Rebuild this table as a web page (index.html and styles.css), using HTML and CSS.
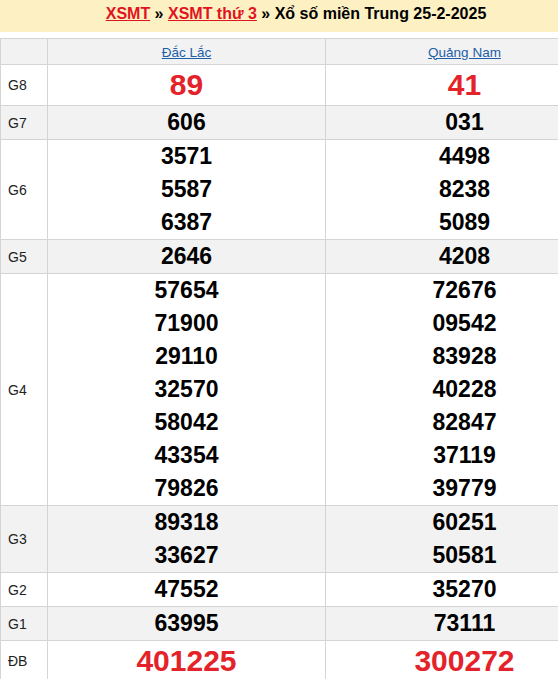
FILE: index.html
```html
<!DOCTYPE html>
<html lang="vi">
<head>
<meta charset="utf-8">
<link rel="stylesheet" href="styles.css">
</head>
<body>
<div class="title">
  <a href="#" class="red">XSMT</a> » <a href="#" class="red">XSMT thứ 3</a> » Xổ số miền Trung 25-2-2025
</div>
<table class="kq">
  <tr class="head alt">
    <td class="lbl"></td>
    <td><a href="#" class="prov">Đắc Lắc</a></td>
    <td><a href="#" class="prov">Quảng Nam</a></td>
  </tr>
  <tr class="big">
    <td class="lbl">G8</td>
    <td><div class="red-num">89</div></td>
    <td><div class="red-num">41</div></td>
  </tr>
  <tr class="alt">
    <td class="lbl">G7</td>
    <td><div class="n">606</div></td>
    <td><div class="n">031</div></td>
  </tr>
  <tr>
    <td class="lbl">G6</td>
    <td><div class="n">3571</div><div class="n">5587</div><div class="n">6387</div></td>
    <td><div class="n">4498</div><div class="n">8238</div><div class="n">5089</div></td>
  </tr>
  <tr class="alt">
    <td class="lbl">G5</td>
    <td><div class="n">2646</div></td>
    <td><div class="n">4208</div></td>
  </tr>
  <tr>
    <td class="lbl">G4</td>
    <td><div class="n">57654</div><div class="n">71900</div><div class="n">29110</div><div class="n">32570</div><div class="n">58042</div><div class="n">43354</div><div class="n">79826</div></td>
    <td><div class="n">72676</div><div class="n">09542</div><div class="n">83928</div><div class="n">40228</div><div class="n">82847</div><div class="n">37119</div><div class="n">39779</div></td>
  </tr>
  <tr class="alt">
    <td class="lbl">G3</td>
    <td><div class="n">89318</div><div class="n">33627</div></td>
    <td><div class="n">60251</div><div class="n">50581</div></td>
  </tr>
  <tr>
    <td class="lbl">G2</td>
    <td><div class="n">47552</div></td>
    <td><div class="n">35270</div></td>
  </tr>
  <tr class="alt">
    <td class="lbl">G1</td>
    <td><div class="n">63995</div></td>
    <td><div class="n">73111</div></td>
  </tr>
  <tr class="big">
    <td class="lbl">ĐB</td>
    <td><div class="red-num">401225</div></td>
    <td><div class="red-num">300272</div></td>
  </tr>
</table>
</body>
</html>
```
FILE: styles.css
```css
html, body {
  margin: 0;
  padding: 0;
  overflow: hidden;
  background: #fff;
  font-family: "Liberation Sans", Arial, sans-serif;
  color: #000;
}
.title {
  width: 604px;
  height: 32px;
  padding-right: 12px;
  line-height: 27px;
  background: #fdf0c3;
  text-align: center;
  font-size: 16px;
  font-weight: bold;
  box-sizing: border-box;
}
.title .red {
  color: #e0141e;
  text-decoration: underline;
}
.kq {
  margin-top: 6px;
  width: 604px;
  border-collapse: collapse;
  table-layout: fixed;
}
.kq td {
  border: 1px solid #d4d4d4;
  padding: 0;
  text-align: center;
  vertical-align: middle;
}
.kq td.lbl {
  width: 47px;
  text-align: left;
  padding-left: 7px;
  box-sizing: border-box;
  font-size: 14px;
  color: #222;
}
.kq tr.alt td {
  background: #f2f2f2;
}
.kq tr.head td {
  height: 25px;
}
.prov {
  color: #1d5ea8;
  font-size: 13.5px;
  text-decoration: underline;
}
.n {
  font-size: 23px;
  font-weight: bold;
  line-height: 33px;
}
.red-num {
  color: #e4222a;
  font-size: 30px;
  font-weight: bold;
  line-height: 40px;
}
```
